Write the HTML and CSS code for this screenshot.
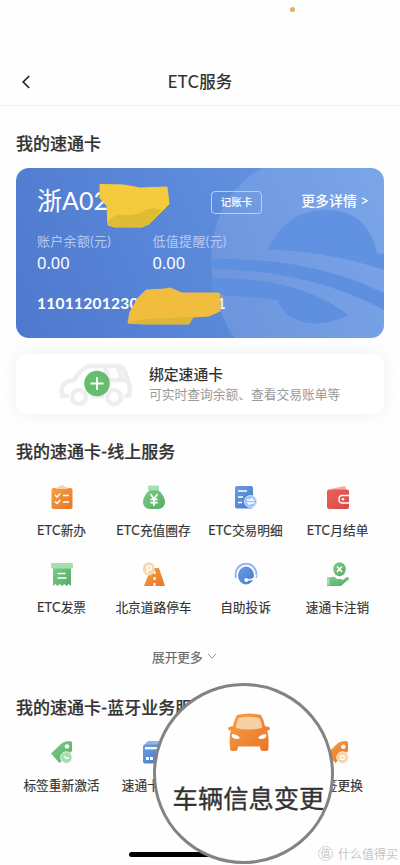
FILE: index.html
```html
<!DOCTYPE html>
<html lang="zh-CN">
<head>
<meta charset="utf-8">
<title>ETC服务</title>
<link rel="stylesheet" href="styles.css">
</head>
<body>
<svg width="0" height="0" class="defs" aria-hidden="true">
  <defs>
    <linearGradient id="orange" x1="0" y1="0" x2="1" y2="1"><stop offset="0" stop-color="#f4a044"/><stop offset="1" stop-color="#e8752a"/></linearGradient>
    <linearGradient id="green" x1="0" y1="0" x2="1" y2="1"><stop offset="0" stop-color="#7dcb86"/><stop offset="1" stop-color="#56ac69"/></linearGradient>
    <linearGradient id="blue" x1="0" y1="0" x2="1" y2="1"><stop offset="0" stop-color="#6a9de2"/><stop offset="1" stop-color="#4778cb"/></linearGradient>
    <linearGradient id="red" x1="0" y1="0" x2="1" y2="1"><stop offset="0" stop-color="#ea6159"/><stop offset="1" stop-color="#dc4a45"/></linearGradient>
  </defs>
</svg>
<main class="screen">
  <div class="status"><span class="mic-dot"></span></div>
  <header class="nav">
    <svg class="back" viewBox="0 0 10 16"><path d="M8.2 2 2.2 8l6 6" fill="none" stroke="#222" stroke-width="1.7"/></svg>
    <h1><span class="latin">ETC</span>服务</h1>
  </header>

  <h2 class="title first">我的速通卡</h2>
  <section class="card">
    <svg class="card-art" viewBox="0 0 368 170">
      <path d="M246 0C216 18 198 43 195 92C197 124 205 151 218 170H368V0Z" fill="#fff" opacity=".11"/>
      <path d="M252 82C263 55 283 42 311 42C340 42 355 59 361 85L368 86V102C330 89 288 82 252 82Z" fill="#6192e2"/>
      <path d="M195 91C261 90 313 99 368 125V142C314 113 257 102 195 101Z" fill="#5f90e0"/>
      <path d="M195 110C258 110 302 123 332 147C313 157 276 164 261 132C240 129 217 128 197 127Z" fill="#5f8fdf"/>
    </svg>
    <div class="plate-row"><strong class="plate">浙A02</strong><span class="tag">记账卡</span><a class="more-info">更多详情 <span>&gt;</span></a></div>
    <dl class="amounts">
      <div><dt>账户余额(元)</dt><dd>0.00</dd></div>
      <div><dt>低值提醒(元)</dt><dd>0.00</dd></div>
    </dl>
    <svg class="card-marks" viewBox="0 0 368 170">
      <path d="M84 16.500 108 17 124 20 151 19 153 36 147 42 133 56 126 59H99L92 57 91 38 84 30Z" fill="#f4cb3c" stroke="#f4cb3c" stroke-linejoin="round"/>
      <path d="M92 54Q100 44 107 47Q122 48 129 42Q137 39 146 42L133 56 126 59H99L92 57Z" fill="#dfbc35"/>
    </svg>
    <div class="number"><span>11011201230</span><span class="tail">1</span></div>
    <svg class="card-marks low" viewBox="0 0 368 170">
      <path d="M130 122 149 121 154 120 166 125 203 125 204 143 193 148 177 149 173 156H128L112 155 114 144 122 130Z" fill="#f1bd3e" stroke="#f1bd3e" stroke-linejoin="round"/>
      <path d="M112 154 129 151 177 149 173 156H128Z" fill="#dcb638"/>
      <path d="M203 125 207 127 206 141 203 143Z" fill="#f1bd3e" opacity=".35"/>
    </svg>
  </section>

  <section class="bind">
    <svg class="bind-car" viewBox="0 0 76 44">
      <g fill="none" stroke="#eeeeef" stroke-width="4.5" stroke-linejoin="round">
        <path d="M12 34H5V27Q6 19 17 18Q26 4 34 4H61Q68 4 71 20Q74 23 72 34H67"/>
        <path d="M34 34H47M48 5 52 18H71M61 5 65 17"/><circle cx="22" cy="35" r="7"/><circle cx="57" cy="35" r="7"/>
      </g>
      <circle cx="40" cy="21.5" r="12.8" fill="#66bd70"/><path d="M33.500 21.5h13M40 15v13" stroke="#fff" stroke-width="1.8"/>
    </svg>
    <div><h3>绑定速通卡</h3><p>可实时查询余额、查看交易账单等</p></div>
  </section>

  <h2 class="title online">我的速通卡-线上服务</h2>
  <ul class="services">
    <li><svg viewBox="0 0 24 24"><rect x="1.5" y="3" width="21" height="21" rx="2" fill="url(#orange)"/><path d="M6 4Q6 2 9 2Q10 0 12 0T15 2Q18 2 18 4Z" fill="#f8d1a2"/><path d="m5 10 2 2 3.3-3.5M5 16.5l2 2 3.3-3.5M13 10.5h6M13 17h6" stroke="#fff" stroke-width="1.5" fill="none"/></svg><span><b>ETC</b>新办</span></li>
    <li><svg viewBox="0 0 24 24"><path d="M8 5h8c4 3 7 8 7 12s-3 7-7 7H8c-4 0-7-3-7-7s3-9 7-12Z" fill="url(#green)"/><rect x="6" y=".5" width="11" height="4.8" rx="1" fill="#a5e0ae"/><path d="m8.5 9 3.5 5 3.5-5M12 14v7M8.3 14.5h7.4M8.3 17.6h7.4" fill="none" stroke="#fff" stroke-width="1.6"/></svg><span><b>ETC</b>充值圈存</span></li>
    <li><svg viewBox="0 0 24 24"><rect x="1" y="1" width="18" height="22.5" rx="2" fill="url(#blue)"/><path d="M4 6h9M4 12h5M4 17.500h4" stroke="#fff" stroke-width="1.6"/><circle cx="16.500" cy="16.5" r="6" fill="#9fc2f2" stroke="#d6e5fa"/><path d="M13 15h6l-2-2M20 18h-6l2 2" fill="none" stroke="#fff" stroke-width="1.3"/></svg><span><b>ETC</b>交易明细</span></li>
    <li><svg viewBox="0 0 24 24"><path d="M5 4 18 1q2 0 2 3v1H3Z" fill="#f4aaa5"/><rect x="1" y="4.5" width="22" height="19.5" rx="2" fill="url(#red)"/><path d="M23 10.5h-7q-3 0-3 3.8t3 3.7h7" fill="#df5650" stroke="#fff" stroke-width="1.5"/><circle cx="17" cy="14.2" r="1.3" fill="#fff"/></svg><span><b>ETC</b>月结单</span></li>
    <li><svg viewBox="0 0 24 24"><path d="M3 4h18v20l-2.2-2-2.3 2-2.3-2L12 24l-2.3-2-2.2 2-2.3-2L3 24Z" fill="url(#green)"/><rect x="1" y="1" width="22" height="5.5" rx="1.2" fill="#a5dfad"/><path d="M7.5 11.5h8M7.5 16h9" stroke="#fff" stroke-width="1.6"/></svg><span><b>ETC</b>发票</span></li>
    <li><svg viewBox="0 0 24 24"><path d="M9 6h8l6 18H2Z" fill="url(#orange)"/><path d="M12.500 9v3M12.500 15v3M12.500 21v3" stroke="#fff" stroke-width="2"/><ellipse cx="6.8" cy="7" rx="6" ry="6.8" fill="#f6d7b1"/><path d="M5.300 11V4h2.2q2 0 2 2T7.300 8h-2" fill="none" stroke="#fff" stroke-width="1.5"/></svg><span>北京道路停车</span></li>
    <li><svg viewBox="0 0 24 24"><path d="M1.7 16v-4a10.3 10.3 0 0 1 20.6 0v4" fill="none" stroke="#96b9eb" stroke-width="2"/><ellipse cx="12" cy="13.5" rx="8" ry="9" fill="url(#blue)"/><path d="M22 13q-1 5-9 5" fill="none" stroke="#fff" stroke-width="1.4"/><circle cx="12.2" cy="18" r="1.9" fill="#fff"/></svg><span>自助投诉</span></li>
    <li><svg viewBox="0 0 24 24"><ellipse cx="13.500" cy="7.2" rx="6.2" ry="7" fill="url(#green)"/><path d="m11 4.5 5 5.4m0-5.4-5 5.4" stroke="#fff" stroke-width="1.6"/><path d="M1 15.200H5Q8 14 11 17h4q2 0 1 1.500l5-3.500q2 0 2 2L15 24H1Z" fill="url(#green)"/><path d="M1 15h2.5v8H1Z" fill="#a8dcaf"/></svg><span>速通卡注销</span></li>
  </ul>
  <div class="expand">展开更多<svg viewBox="0 0 10 6"><path d="m1 1 4 4 4-4" fill="none" stroke="#999"/></svg></div>

  <h2 class="title bluetooth">我的速通卡-蓝牙业务服</h2>
  <ul class="services local">
    <li><svg viewBox="0 0 24 24"><path d="M1 13.5 12 3Q15 1 20 1q2 0 2 2v8L9.5 23Z" fill="url(#green)"/><circle cx="17" cy="6.5" r="2.3" fill="#fff"/><circle cx="16.3" cy="17.5" r="5.7" fill="#a1deaa" stroke="#e6f7e8"/><path d="m14 16 2.3 2.5 2.5-1" fill="none" stroke="#fff" stroke-width="1.5"/></svg><span>标签重新激活</span></li>
    <li class="clip-right"><svg viewBox="0 0 24 24"><path d="m2 5 4-4h17v18l-3 4Z" fill="#90b4e7"/><rect x="1" y="4.5" width="20" height="19" rx="2" fill="url(#blue)"/><path d="M3 8.2h18" stroke="#fff" stroke-width="2.3"/><path d="M4 18.5h3m1 0h3" stroke="#fff" stroke-width="2.8"/></svg><span>速通卡</span></li>
    <li></li>
    <li class="clip-left"><svg viewBox="0 0 24 24"><path d="M1 13.5 12 3Q15 1 20 1q2 0 2 2v8L9.5 23Z" fill="url(#orange)"/><circle cx="17.3" cy="6.7" r="2.3" fill="#fff"/><circle cx="16.5" cy="17.5" r="5.7" fill="#f8d1a4" stroke="#fff1df"/><path d="M13.7 17q3-3 5.3 0m0 1q-3 3-5.3 0" fill="none" stroke="#fff" stroke-width="1.5"/></svg><span>签更换</span></li>
  </ul>

  <div class="home-bar"></div>
  <div class="watermark"><i>值</i><span>什么值得买</span></div>
  <div class="lens">
    <svg viewBox="0 0 42 38"><path d="M9 2Q21-1 33 2Q36 7 37 13L41 14Q43 15 41 17L39 18Q41 21 40.500 35Q40.500 38 38 38H35Q32 38 32 33.500H10Q10 38 7 38H4Q2 38 2 35Q1 22 3 18L1 17Q-1 15 1 14L5 13Q6 7 9 2Z" fill="url(#orange)"/><path d="M10.500 5Q21 2.500 31.500 5Q34 10 34 15Q21 18 8 15Q8 10 10.500 5Z" fill="#f8d1a2"/><path d="M4 21Q9 21 12 25Q9 27 5 25Q3 24 4 21ZM38 21Q33 21 30 25Q33 27 37 25Q39 24 38 21Z" fill="#fff"/></svg>
    <span>车辆信息变更</span>
  </div>
</main>
</body>
</html>
```
FILE: styles.css
```css
* { box-sizing: border-box; margin: 0; padding: 0; }
body { background: #fefefe; color: #333; font-family: Lato, "Noto Sans CJK SC", sans-serif; }
.defs { position: absolute; }
.screen { position: relative; width: 400px; height: 865px; overflow: hidden; }
.status { height: 58px; padding: 6.5px 0 0 289.5px; }
.mic-dot { display: block; width: 5px; height: 5px; border-radius: 50%; background: #e5ae61; }
.nav { height: 48px; display: grid; grid-template-columns: 60px 1fr 60px; align-items: center; border-bottom: 1px solid #f1f1f1; }
.back { width: 10px; height: 16px; margin-left: 21px; }
h1 { font-size: 16.5px; line-height: 24px; font-weight: 500; text-align: center; }
.latin { letter-spacing: .6px; }
.title { height: 24px; margin-left: 16px; font-size: 17px; line-height: 24px; font-weight: 500; white-space: nowrap; -webkit-text-stroke: .2px #333; }
.first { margin-top: 26px; }
.card { position: relative; height: 170px; margin: 11.500px 16px 0; padding: 16px 15px 0 21px; border-radius: 13px; overflow: hidden; color: #fff; background: linear-gradient(65deg, #4e78cd, #5b89da 50%, #6c9be6); }
.card-art, .card-marks { position: absolute; left: 0; top: 0; width: 368px; height: 170px; }
.plate-row, .amounts, .number { position: relative; display: flex; }
.plate-row { height: 32px; align-items: center; }
.plate { width: 174px; font-size: 25px; line-height: 32px; font-weight: 400; }
.tag { width: 51px; height: 23px; border: 1px solid #b9d0f5; border-radius: 4px; font-size: 10.500px; line-height: 20px; text-align: center; font-weight: 500; margin-top: 5px; }
.more-info { margin-left: auto; font-size: 13.900px; font-weight: 500; white-space: nowrap; }
.more-info span { font-size: 15px; font-weight: 400; }
.amounts { padding-top: 14px; }
.amounts div { width: 115.500px; }
dt { font-size: 13px; line-height: 22px; color: #b5caf0; letter-spacing: .3px; white-space: nowrap; }
dd { font-size: 16.500px; line-height: 21px; font-family: "Noto Sans", sans-serif; }
.number { width: 189px; justify-content: space-between; margin-top: 19px; font: 700 15.500px/22px Lato, sans-serif; letter-spacing: .25px; }
.bind { height: 60px; margin: 16px 16px 0; padding-left: 41px; display: flex; align-items: center; border-radius: 12px; background: #fff; box-shadow: 0 0 18px #00000010; }
.bind-car { width: 76px; height: 44px; margin-right: 16px; }
h3 { font-size: 14.800px; line-height: 21px; font-weight: 500; }
.bind p { font-size: 12.750px; line-height: 19px; color: #999; white-space: nowrap; }
.online { margin-top: 26px; }
.services { list-style: none; display: grid; grid-template-columns: repeat(4, 92px); grid-auto-rows: 76.500px; margin: 21.500px 0 0 15.500px; }
.services li { display: flex; flex-direction: column; align-items: center; }
.services svg { width: 24px; height: 24px; }
.services span { margin-top: 11px; font-size: 12.700px; line-height: 20px; white-space: nowrap; -webkit-text-stroke: .15px #333; }
.services b { font-weight: 400; letter-spacing: .25px; }
.clip-right span { padding-right: 25.400px; }
.clip-left span { padding-left: 12.700px; }
.expand { height: 20px; margin: 8px 0 0 152px; display: flex; align-items: center; font-size: 12.700px; color: #666; -webkit-text-stroke: .15px #666; }
.expand svg { width: 10px; height: 6px; margin-left: 4px; }
.bluetooth { margin-top: 29.500px; }
.local { margin-top: 20.500px; }
.home-bar { position: absolute; left: 129px; top: 851.500px; width: 142px; height: 5px; border-radius: 3px; background: #000; }
.lens { position: absolute; left: 152.500px; top: 682.500px; width: 181px; height: 181px; border: 3.500px solid #838383; border-radius: 50%; overflow: hidden; background: #fefefe; display: flex; flex-direction: column; align-items: center; padding-top: 27px; }
.lens svg { width: 42px; height: 38px; margin-left: 12px; flex: none; }
.lens span { margin: 29px 0 0 11px; font-size: 25.300px; line-height: 36px; white-space: nowrap; -webkit-text-stroke: .35px #333; }
.watermark { position: absolute; left: 318px; top: 844px; display: flex; align-items: center; gap: 5px; height: 18px; color: #c4c4c4; font-size: 12px; white-space: nowrap; }
.watermark i { width: 15px; height: 15px; border: 1px solid #d2d2d2; border-radius: 50%; font-size: 10px; line-height: 13px; font-style: normal; text-align: center; }
```
